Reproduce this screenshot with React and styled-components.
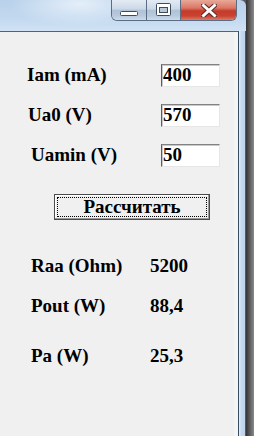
import React from 'react';
import styled, { createGlobalStyle } from 'styled-components';

const GlobalStyle = createGlobalStyle`
  html, body {
    margin: 0;
    padding: 0;
    background: #5a5a5a;
  }
  * {
    box-sizing: border-box;
  }
`;

const inputs = [
  { label: 'Iam (mA)', value: '400', shift: 27 },
  { label: 'Ua0 (V)', value: '570', shift: 28 },
  { label: 'Uamin (V)', value: '50', shift: 31 },
];

const results = [
  { label: 'Raa (Ohm)', value: '5200', gap: 0 },
  { label: 'Pout (W)', value: '88,4', gap: 0 },
  { label: 'Pa (W)', value: '25,3', gap: 10 },
];

function MinGlyph() {
  return (
    <svg width="19" height="6" viewBox="0 0 19 6">
      <rect x="0.5" y="0.5" width="17" height="4" rx="1" fill="#fff" stroke="#3c4c60" />
    </svg>
  );
}

function MaxGlyph() {
  return (
    <svg width="16" height="14" viewBox="0 0 16 14">
      <rect x="0.5" y="0.5" width="14" height="12" rx="1" fill="#fff" stroke="#3c4c60" />
      <rect x="3.5" y="4.5" width="8" height="5" fill="#b9c6d4" stroke="#3c4c60" />
    </svg>
  );
}

function CloseGlyph() {
  return (
    <svg width="16" height="13" viewBox="0 0 16 13">
      <path d="M2.5 1.5 L13.5 11.5 M13.5 1.5 L2.5 11.5" stroke="#5a2a24" strokeWidth="5" strokeLinecap="square" />
      <path d="M2.5 1.5 L13.5 11.5 M13.5 1.5 L2.5 11.5" stroke="#fff" strokeWidth="3" strokeLinecap="square" />
    </svg>
  );
}

export default function App() {
  return (
    <>
      <GlobalStyle />
      <Desktop>
        <Window>
          <TitleBar>
            <Caption>
              <CapButton $kind="min">
                <MinGlyph />
              </CapButton>
              <CapButton $kind="max">
                <MaxGlyph />
              </CapButton>
              <CapButton $kind="close">
                <CloseGlyph />
              </CapButton>
            </Caption>
          </TitleBar>
          <Body>
            <Client>
              {inputs.map(row => (
                <InputRow key={row.label}>
                  <Label $shift={row.shift}>{row.label}</Label>
                  <Field type="text" value={row.value} readOnly />
                </InputRow>
              ))}
              <ButtonRow>
                <CalcButton type="button">Рассчитать</CalcButton>
              </ButtonRow>
              <Results>
                {results.map(row => (
                  <ResultRow key={row.label} $gap={row.gap}>
                    <Label $shift={31}>{row.label}</Label>
                    <Value>{row.value}</Value>
                  </ResultRow>
                ))}
              </Results>
            </Client>
            <Frame />
          </Body>
        </Window>
        <Shadow />
      </Desktop>
    </>
  );
}

const Desktop = styled.div`
  display: flex;
  width: 254px;
  height: 436px;
  overflow: hidden;
`;

const Window = styled.div`
  display: flex;
  flex-direction: column;
  width: 246px;
  height: 100%;
  border-top-right-radius: 6px;
  overflow: hidden;
`;

const TitleBar = styled.div`
  display: flex;
  justify-content: flex-end;
  align-items: flex-start;
  height: 31px;
  padding-right: 9px;
  background:
    radial-gradient(ellipse 70px 22px at 80px 4px, rgba(236, 244, 252, 0.85), rgba(236, 244, 252, 0)),
    linear-gradient(180deg, #b9d1ea 0%, #c2d8ef 55%, #d0e2f4 100%);
`;

const Caption = styled.div`
  display: flex;
  height: 21px;
  border: 1px solid #5b6d82;
  border-top: none;
  border-radius: 0 0 6px 6px;
  overflow: hidden;
`;

const CapButton = styled.div`
  display: flex;
  align-items: center;
  justify-content: center;
  width: ${p => (p.$kind === 'close' ? '56px' : p.$kind === 'max' ? '34px' : '34px')};
  height: 100%;
  padding-top: ${p => (p.$kind === 'min' ? '7px' : '0')};
  border-left: ${p => (p.$kind === 'min' ? 'none' : '1px solid #5b6d82')};
  background: ${p =>
    p.$kind === 'close'
      ? 'linear-gradient(180deg, #e9a999 0%, #db7664 40%, #c63a29 55%, #c9432f 80%, #dc7a68 100%)'
      : 'linear-gradient(180deg, #e3ebf4 0%, #cbd8e7 45%, #b1c2d6 52%, #b9cadd 80%, #cfdcea 100%)'};
`;

const Body = styled.div`
  display: flex;
  flex: 1;
`;

const Client = styled.div`
  flex: 1;
  display: flex;
  flex-direction: column;
  padding-top: 23px;
  background: #f0f0f0;
  border-top: 1px solid #4f6378;
  border-right: 1px solid #3a4c60;
  box-shadow: inset -4px 0 0 #f5f5f5;
  font-family: 'Liberation Serif', 'Times New Roman', serif;
  font-weight: bold;
  font-size: 19px;
  color: #000;
`;

const InputRow = styled.div`
  display: grid;
  grid-template-columns: 161px 59px;
  align-items: center;
  height: 40px;
`;

const Label = styled.div`
  padding-left: ${p => p.$shift}px;
  white-space: nowrap;
`;

const Field = styled.input`
  width: 59px;
  height: 23px;
  margin: 0;
  padding: 0 0 0 1px;
  border: 1px solid;
  border-color: #828282 #e6e6e6 #e6e6e6 #5e5e5e;
  box-shadow: inset 1px 1px 0 #c9c9c9;
  background: #fff;
  font-family: 'Liberation Serif', 'Times New Roman', serif;
  font-weight: bold;
  font-size: 19px;
  color: #000;
  outline: none;
`;

const ButtonRow = styled.div`
  display: flex;
  padding-left: 54px;
  margin-top: 19px;
`;

const CalcButton = styled.button`
  width: 156px;
  height: 26px;
  margin: 0;
  padding: 0;
  background: #f0f0f0;
  border: 1px solid #4a4a4a;
  box-shadow: inset -1px -1px 0 #9a9a9a, inset 1px 1px 0 #fff;
  outline: 1px dotted #000;
  outline-offset: -4px;
  font-family: 'Liberation Serif', 'Times New Roman', serif;
  font-weight: bold;
  font-size: 19px;
  color: #000;
`;

const Results = styled.div`
  display: flex;
  flex-direction: column;
  margin-top: 26px;
`;

const ResultRow = styled.div`
  display: grid;
  grid-template-columns: 150px auto;
  align-items: center;
  height: 40px;
  margin-top: ${p => p.$gap}px;
`;

const Value = styled.div`
  white-space: nowrap;
`;

const Frame = styled.div`
  width: 7px;
  background: linear-gradient(90deg, #e4eefa 0%, #c3d8ef 40%, #bcd3ec 100%);
  border-right: 1px solid #4b5d72;
`;

const Shadow = styled.div`
  width: 8px;
  height: 100%;
  background: linear-gradient(90deg, #333 0%, #555 40%, #8a8a8a 100%);
`;
